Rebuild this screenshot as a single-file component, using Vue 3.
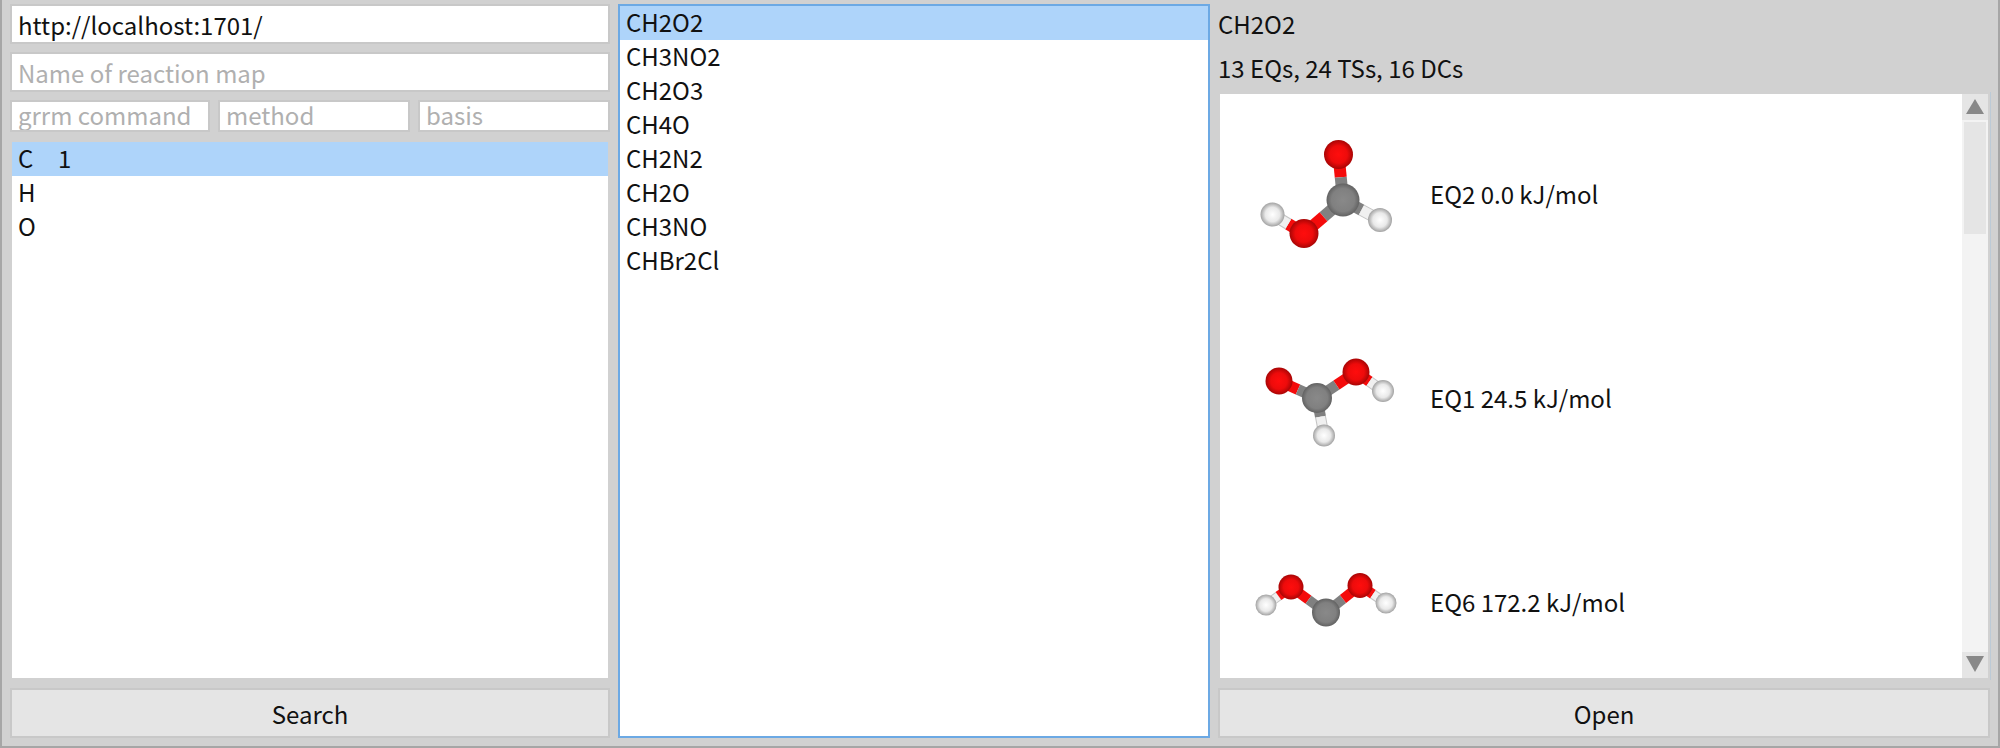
<script setup>
import { ref } from 'vue'

const url = ref('http://localhost:1701/')
const mapName = ref('')
const command = ref('')
const method = ref('')
const basis = ref('')

const elements = [
  { symbol: 'C', count: '1' },
  { symbol: 'H', count: '' },
  { symbol: 'O', count: '' },
]
const selectedElement = ref('C')

const formulas = ['CH2O2', 'CH3NO2', 'CH2O3', 'CH4O', 'CH2N2', 'CH2O', 'CH3NO', 'CHBr2Cl']
const selectedFormula = ref('CH2O2')

const colors = { C: '#808080', O: '#f40b0b', H: '#f0f0f0' }

// Atoms are [element, x, y, radius]; bonds are pairs of atom indices.
const structures = [
  {
    label: 'EQ2 0.0 kJ/mol',
    atoms: [['O', 118.5, 154.5 - 94, 14.5], ['C', 123, 106, 16.5], ['O', 84, 139.5, 14.5], ['H', 52.5, 120.5, 12], ['H', 160, 126, 12]],
    bonds: [[0, 1], [1, 2], [2, 3], [1, 4]],
    width: 12,
  },
  {
    label: 'EQ1 24.5 kJ/mol',
    atoms: [['O', 59, 83, 13.5], ['C', 97, 100, 15], ['O', 136, 74, 13.5], ['H', 163, 93, 11], ['H', 104, 137.5, 11]],
    bonds: [[0, 1], [1, 2], [2, 3], [1, 4]],
    width: 11,
  },
  {
    label: 'EQ6 172.2 kJ/mol',
    atoms: [['H', 46, 103, 10.5], ['O', 71, 85, 12.5], ['C', 106, 110.5, 14], ['O', 140, 83.5, 12.5], ['H', 166, 101, 10.5]],
    bonds: [[0, 1], [1, 2], [2, 3], [3, 4]],
    width: 10,
  },
]

function halves(s) {
  return s.bonds.flatMap(([a, b]) => {
    const p = s.atoms[a]
    const q = s.atoms[b]
    const mx = (p[1] + q[1]) / 2
    const my = (p[2] + q[2]) / 2
    return [p, q].map((t) => ({ x1: t[1], y1: t[2], x2: mx, y2: my, kind: t[0] }))
  })
}
</script>

<template>
  <main class="window">
    <form class="column search" @submit.prevent>
      <input v-model="url" class="field" type="text" aria-label="Server URL" />
      <input v-model="mapName" class="field" type="text" placeholder="Name of reaction map" aria-label="Name of reaction map" />
      <div class="filters">
        <input v-model="command" class="field short" type="text" placeholder="grrm command" aria-label="grrm command" />
        <input v-model="method" class="field short" type="text" placeholder="method" aria-label="method" />
        <input v-model="basis" class="field short" type="text" placeholder="basis" aria-label="basis" />
      </div>
      <ul class="list" role="listbox" aria-label="Elements">
        <li
          v-for="e in elements"
          :key="e.symbol"
          class="row"
          :class="{ selected: e.symbol === selectedElement }"
          role="option"
          :aria-selected="e.symbol === selectedElement"
          @click="selectedElement = e.symbol"
        >
          <span class="symbol">{{ e.symbol }}</span><span>{{ e.count }}</span>
        </li>
      </ul>
      <button class="action" type="submit">Search</button>
    </form>

    <ul class="list focused" role="listbox" aria-label="Formulas">
      <li
        v-for="f in formulas"
        :key="f"
        class="row"
        :class="{ selected: f === selectedFormula }"
        role="option"
        :aria-selected="f === selectedFormula"
        @click="selectedFormula = f"
      >{{ f }}</li>
    </ul>

    <section class="column details">
      <header class="summary">
        <p>{{ selectedFormula }}</p>
        <p>13 EQs, 24 TSs, 16 DCs</p>
      </header>
      <div class="list results">
        <ul class="structures">
          <li v-for="s in structures" :key="s.label" class="structure">
            <svg class="molecule" viewBox="0 0 204 204" aria-hidden="true">
              <defs>
                <radialGradient id="shade-C">
                  <stop offset="0" stop-color="#898989" />
                  <stop offset="0.7" stop-color="#808080" />
                  <stop offset="1" stop-color="#626262" />
                </radialGradient>
                <radialGradient id="shade-O">
                  <stop offset="0" stop-color="#ff0d0d" />
                  <stop offset="0.6" stop-color="#ee0b0b" />
                  <stop offset="1" stop-color="#a80505" />
                </radialGradient>
                <radialGradient id="shade-H">
                  <stop offset="0" stop-color="#ffffff" />
                  <stop offset="0.6" stop-color="#e9e9e9" />
                  <stop offset="1" stop-color="#a2a2a2" />
                </radialGradient>
              </defs>
              <g v-for="(h, i) in halves(s)" :key="'b' + i">
                <line
                  v-if="h.kind === 'H'"
                  :x1="h.x1" :y1="h.y1" :x2="h.x2" :y2="h.y2"
                  stroke="#c4c4c4" :stroke-width="s.width"
                />
                <line
                  :x1="h.x1" :y1="h.y1" :x2="h.x2" :y2="h.y2"
                  :stroke="colors[h.kind]" :stroke-width="h.kind === 'H' ? s.width - 2 : s.width"
                />
              </g>
              <circle
                v-for="(a, i) in s.atoms"
                :key="'a' + i"
                :cx="a[1]" :cy="a[2]" :r="a[3]"
                :fill="`url(#shade-${a[0]})`"
              />
            </svg>
            <span>{{ s.label }}</span>
          </li>
        </ul>
        <div class="scrollbar">
          <button class="arrow" type="button" aria-label="Scroll up">
            <svg viewBox="0 0 26 26"><path d="M13 5 22 20H4Z" fill="#888" /></svg>
          </button>
          <div class="track"><div class="thumb"></div></div>
          <button class="arrow" type="button" aria-label="Scroll down">
            <svg viewBox="0 0 26 26"><path d="M4 4H22L13 20Z" fill="#888" /></svg>
          </button>
        </div>
      </div>
      <button class="action" type="button">Open</button>
    </section>
  </main>
</template>

<style>
body {
  margin: 0;
}
</style>

<style scoped>
.window {
  box-sizing: border-box;
  height: 100vh;
  display: grid;
  grid-template-columns: minmax(0, 600fr) minmax(0, 592fr) minmax(0, 772fr);
  grid-template-rows: minmax(0, 1fr);
  gap: 8px;
  padding: 4px 8px 8px;
  border: 2px solid #a6a6a6;
  border-top: 0;
  background: #d1d1d1;
  color: #111;
  font-family: "Noto Sans CJK JP", "Noto Sans", sans-serif;
  font-size: 24px;
  line-height: 30px;
}

.window * {
  box-sizing: border-box;
}

.column {
  display: flex;
  flex-direction: column;
  gap: 8px;
  min-height: 0;
}

.field {
  width: 100%;
  min-width: 0;
  height: 40px;
  margin: 0;
  padding: 0 6px;
  border: 2px solid #c8c8c8;
  border-radius: 0;
  outline: 0;
  background: #fff;
  color: inherit;
  font: inherit;
}

.field::placeholder {
  color: #b0b0b0;
  opacity: 1;
}

.short {
  height: 32px;
  padding-bottom: 4px;
}

.filters {
  display: grid;
  grid-template-columns: 200fr 192fr 192fr;
  gap: 8px;
}

.list {
  flex: 1;
  min-height: 0;
  margin: 0;
  padding: 0;
  border: 2px solid #d1d1d1;
  background: #fff;
  list-style: none;
  overflow: hidden;
}

.focused {
  border-color: #6ca9e4;
}

.row {
  display: flex;
  height: 34px;
  padding: 0 6px 2px;
  line-height: 32px;
}

.selected {
  background: #aed4fa;
}

.symbol {
  width: 40px;
}

.action {
  flex: none;
  height: 50px;
  padding: 2px 0 0;
  border: 2px solid #c8c8c8;
  border-radius: 0;
  background: #e5e5e5;
  color: inherit;
  font: inherit;
}

.summary {
  height: 80px;
  display: flex;
  flex-direction: column;
  gap: 14px;
  padding-top: 5px;
}

.summary p {
  margin: 0;
}

.results {
  display: flex;
  box-shadow: 1px 0 #bccad6;
}

.structures {
  flex: 1;
  margin: 0;
  padding: 0;
  list-style: none;
}

.structure {
  height: 204px;
  display: flex;
  align-items: center;
  gap: 6px;
}

.structure span {
  padding-bottom: 4px;
}

.molecule {
  width: 204px;
  height: 204px;
}

.scrollbar {
  width: 26px;
  display: flex;
  flex-direction: column;
  background: #f3f3f3;
}

.arrow {
  height: 26px;
  padding: 0;
  border: 0;
  background: #e5e5e5;
}

.arrow svg {
  display: block;
}

.track {
  flex: 1;
  padding: 2px;
}

.thumb {
  height: 20%;
  min-height: 112px;
  background: #e5e5e5;
}
</style>
